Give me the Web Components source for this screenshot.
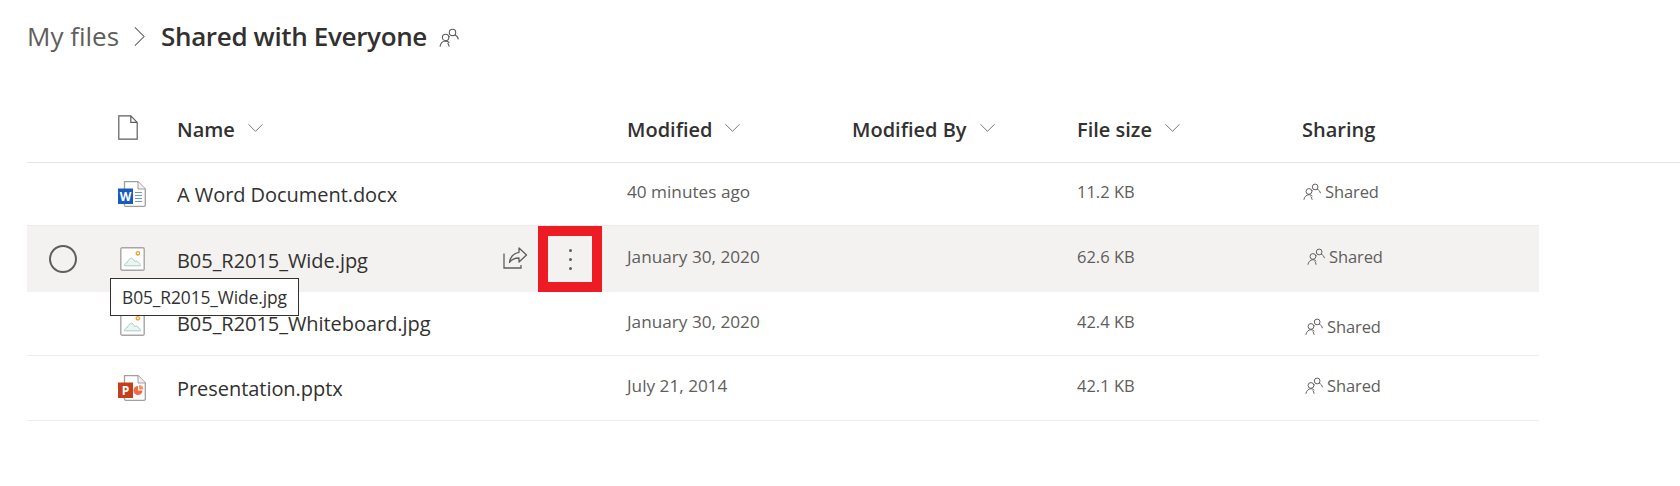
<!DOCTYPE html>
<html lang="en">
<head>
<meta charset="utf-8">
<title>Shared with Everyone</title>
<style>
  html, body { margin: 0; background: #fff; }
  body { font-family: "Open Sans", "Noto Sans", sans-serif; color: #323130; }
</style>
</head>
<body>

<template id="icons">
  <svg data-icon="people" viewBox="0 0 20 20" fill="none" stroke="currentColor" stroke-width="1.1">
    <circle cx="6.6" cy="9.4" r="3.2"/>
    <path d="M1 18.6c.5-3 2.6-5.500 5.600-5.600 1.500 0 2.800.6 3.800 1.700M10.200 18.600c-.3-1.300-.8-2.700-1.500-3.700"/>
    <circle cx="13.500" cy="4.400" r="3.200"/>
    <path d="M10.800 8.500c-.2.200-.6.300-.8.500M15.900 7c1.900.7 3.100 2.300 3.400 4.300"/>
  </svg>
  <svg data-icon="chevron" viewBox="0 0 20 12" fill="none" stroke="currentColor" stroke-width="1">
    <path d="M1.500 1.500 10 10l8.500-8.500"/>
  </svg>
  <svg data-icon="crumb" viewBox="0 0 12 22" fill="none" stroke="currentColor" stroke-width="1.100">
    <path d="M1 1l10 10L1 21"/>
  </svg>
  <svg data-icon="page" viewBox="0 0 20 25" fill="none" stroke="currentColor" stroke-width="1.200">
    <path d="M.8.800h12l6.400 6.600v16.800H.8zM12.800.800v6.600h6.400"/>
  </svg>
  <svg data-icon="share" viewBox="0 0 24 22" fill="none" stroke="currentColor" stroke-width="1.300">
    <path d="M1 6.500v14.500h17v-3"/>
    <path d="M16 1 23.500 8 16 15v-4c-4 0-7 .8-9.500 4.500C7 10.500 10.500 6 16 5.300z" stroke-linejoin="round"/>
  </svg>
  <svg data-icon="word" viewBox="0 0 28 26">
    <path d="M6.500 .7h13.500l7.300 7.300v16a1.300 1.300 0 0 1-1.300 1.300H7.800a1.300 1.300 0 0 1-1.300-1.300z" fill="#fff" stroke="#a19f9d" stroke-width="1.300"/>
    <path d="M20 .7v7.300h7.300" fill="#f3f2f1" stroke="#a19f9d" stroke-width="1"/>
    <path d="M17 11.500h7M17 14.500h7M17 17.500h7M17 20.500h7" stroke="#6f97d1" stroke-width="1.200"/>
    <rect x="0" y="7.500" width="15" height="15.500" fill="#185abd"/>
    <text x="7.500" y="19.500" text-anchor="middle" font-family="Open Sans, sans-serif" font-size="12" font-weight="700" fill="#fff">W</text>
  </svg>
  <svg data-icon="image" viewBox="0 0 25 24">
    <rect x=".8" y=".8" width="23.400" height="22.400" rx="1.300" fill="#fff" stroke="#a8a6a4" stroke-width="1.400"/>
    <circle cx="17.800" cy="6.300" r="1.700" fill="none" stroke="#eaa225" stroke-width="1.300"/>
    <path d="M4.500 18.800c0-2 1.600-3.400 2.800-3.100.7-2.600 2.600-4.400 4.300-4.400 1.800 0 2.200 2.900 3.200 3.200 1.300-.9 3-.3 3.600 1.100 1 .3 2 1.600 2 3.200z" fill="#edf5f3" stroke="#a6cfc8" stroke-width="1"/>
  </svg>
  <svg data-icon="ppt" viewBox="0 0 28 26">
    <path d="M6.500 .7h13.500l7.300 7.300v16a1.300 1.300 0 0 1-1.300 1.300H7.800a1.300 1.300 0 0 1-1.300-1.300z" fill="#fff" stroke="#a19f9d" stroke-width="1.300"/>
    <path d="M20 .7v7.300h7.300" fill="#f3f2f1" stroke="#a19f9d" stroke-width="1"/>
    <path d="M20 11v4.500h4.500A4.500 4.500 0 1 1 20 11z" fill="#ed6c47"/>
    <path d="M21 10v4.500h4.500A4.500 4.500 0 0 0 21 10z" fill="#ff8f6b"/>
    <rect x="0" y="7.500" width="15" height="15.500" fill="#c43e1c"/>
    <text x="7.500" y="19.500" text-anchor="middle" font-family="Open Sans, sans-serif" font-size="12" font-weight="700" fill="#fff">P</text>
  </svg>
</template>

<script>
  const iconSource = document.getElementById('icons').content;

  class OdIcon extends HTMLElement {
    connectedCallback() {
      const root = this.attachShadow({ mode: 'open' });
      const w = this.getAttribute('w');
      const h = this.getAttribute('h');
      root.innerHTML = `
        <style>
          :host { display: inline-flex; flex: none; width: ${w}px; height: ${h}px; }
          svg { width: 100%; height: 100%; display: block; overflow: visible; }
        </style>`;
      root.append(iconSource.querySelector(`[data-icon="${this.getAttribute('name')}"]`).cloneNode(true));
    }
  }

  class OdBreadcrumb extends HTMLElement {
    connectedCallback() {
      this.attachShadow({ mode: 'open' }).innerHTML = `
        <style>
          :host { display: flex; align-items: center; height: 24px; padding: 24px 0 0 27px; color: #605e5c; }
          .parent { font-size: 26px; }
          .crumb { margin: 0 16px 0 15px; }
          .current { font-size: 26px; font-weight: 600; color: #323130; letter-spacing: -.35px; }
          .people { margin: 4px 0 0 12px; }
        </style>
        <span class="parent"><slot name="parent"></slot></span>
        <od-icon class="crumb" name="crumb" w="11" h="21"></od-icon>
        <span class="current"><slot name="current"></slot></span>
        <od-icon class="people" name="people" w="20" h="20"></od-icon>`;
    }
  }

  class OdFileList extends HTMLElement {
    connectedCallback() {
      this.attachShadow({ mode: 'open' }).innerHTML = `
        <style>
          :host { display: block; margin-top: 52px; }
          .rows { width: 1512px; margin-left: 27px; }
        </style>
        <slot name="header"></slot>
        <div class="rows"><slot></slot></div>`;
    }
  }

  const COLS = 'grid-template-columns: 73px 77px 450px 225px 225px 225px 1fr;';

  class OdHeaderRow extends HTMLElement {
    connectedCallback() {
      const col = (label, sort = true) => `
        <div class="col">${label}${sort ? '<od-icon name="chevron" w="17" h="10"></od-icon>' : ''}</div>`;
      this.attachShadow({ mode: 'open' }).innerHTML = `
        <style>
          :host { display: grid; ${COLS} height: 59px; padding-bottom: 3px; margin-left: 27px; align-items: center;
                  border-bottom: 1px solid #e6e4e2; color: #323130; }
          .col { display: flex; align-items: center; gap: 12px; font-size: 20px; font-weight: 600; }
          .col od-icon { color: #605e5c; margin-bottom: 4px; }
          .file { color: #605e5c; padding-left: 18px; }
        </style>
        <div></div>
        <div class="file"><od-icon name="page" w="20" h="25"></od-icon></div>
        ${col('Name')}${col('Modified')}${col('Modified By')}${col('File size')}${col('Sharing', false)}`;
    }
  }

  class OdFileRow extends HTMLElement {
    connectedCallback() {
      const a = n => this.getAttribute(n) || '';
      const hover = this.hasAttribute('hover');
      this.attachShadow({ mode: 'open' }).innerHTML = `
        <style>
          :host { display: grid; ${COLS} height: ${a('h')}px; align-items: center; color: #605e5c; font-size: 16.500px;
                  background: ${hover ? '#f3f2f1' : '#fff'}; border-bottom: 1px solid ${hover ? '#f3f2f1' : '#edebe9'};
                  position: relative; }
          .check { box-sizing: border-box; width: 28px; height: 28px; border: 2px solid #605e5c; border-radius: 50%; margin-left: 22px; }
          .name { display: flex; align-items: center; height: 100%; padding-right: 25px; }
          .label { flex: 1; font-size: 20px; color: #323130; letter-spacing: -.05px; padding-top: ${a('name-top') || 0}px; }
          .icon-cell { display: flex; margin-left: ${a('icon-left') || 0}px; }
          .more { box-sizing: border-box; width: 64px; height: 66px; border: 10px solid #ed1c24; display: flex;
                  flex-direction: column; align-items: center; justify-content: center; gap: 6px; }
          .more i { width: 3px; height: 3px; border-radius: 50%; background: #605e5c; }
          .share { margin: 0 11px 2px 0; color: #605e5c; }
          .date { padding-bottom: 5px; font-size: 17.200px; }
          .size { padding-bottom: 5px; }
          .sharing { display: flex; align-items: center; gap: 4px; padding-left: ${a('share-left') || 1}px;
                     padding-bottom: ${a('share-bottom') || 0}px; padding-top: ${a('share-top') || 0}px; }
          .sharing span { letter-spacing: -.1px; }
        </style>
        <div>${hover ? '<div class="check"></div>' : ''}</div>
        <div class="icon-cell"><od-icon name="${a('icon')}" w="${a('icon') === 'image' ? 25 : 28}" h="${a('icon') === 'image' ? 24 : 26}"></od-icon></div>
        <div class="name">
          <span class="label">${a('name')}</span>
          ${hover ? `<od-icon class="share" name="share" w="24" h="22"></od-icon>
                     <div class="more"><i></i><i></i><i></i></div>` : ''}
        </div>
        <div class="date">${a('modified')}</div>
        <div></div>
        <div class="size">${a('size')}</div>
        <div class="sharing"><od-icon name="people" w="18" h="18"></od-icon><span>Shared</span></div>
        <slot></slot>`;
    }
  }

  class OdTooltip extends HTMLElement {
    connectedCallback() {
      this.attachShadow({ mode: 'open' }).innerHTML = `
        <style>
          :host { position: absolute; left: 83px; top: 52px; z-index: 2; box-sizing: border-box; height: 38px;
                  display: flex; align-items: center; padding: 0 11px; background: #fff;
                  border: 1px solid #323130; color: #323130; font-size: 17.400px; letter-spacing: -.1px; white-space: nowrap; }
        </style>
        <slot></slot>`;
    }
  }

  customElements.define('od-icon', OdIcon);
  customElements.define('od-breadcrumb', OdBreadcrumb);
  customElements.define('od-file-list', OdFileList);
  customElements.define('od-header-row', OdHeaderRow);
  customElements.define('od-file-row', OdFileRow);
  customElements.define('od-tooltip', OdTooltip);
</script>

<od-breadcrumb>
  <span slot="parent">My files</span>
  <span slot="current">Shared with Everyone</span>
</od-breadcrumb>

<od-file-list>
  <od-header-row slot="header"></od-header-row>
  <od-file-row h="62" icon="word" icon-left="18" name="A Word Document.docx" modified="40 minutes ago" size="11.2 KB" share-bottom="5"></od-file-row>
  <od-file-row h="65" hover icon="image" icon-left="20" name="B05_R2015_Wide.jpg" modified="January 30, 2020" size="62.6 KB" share-left="5" share-bottom="5" name-top="3">
    <od-tooltip>B05_R2015_Wide.jpg</od-tooltip>
  </od-file-row>
  <od-file-row h="63" icon="image" icon-left="20" name="B05_R2015_Whiteboard.jpg" modified="January 30, 2020" size="42.4 KB" share-left="3" share-top="6"></od-file-row>
  <od-file-row h="64" icon="ppt" icon-left="18" name="Presentation.pptx" modified="July 21, 2014" size="42.1 KB" share-left="3" share-bottom="5"></od-file-row>
</od-file-list>

</body>
</html>
